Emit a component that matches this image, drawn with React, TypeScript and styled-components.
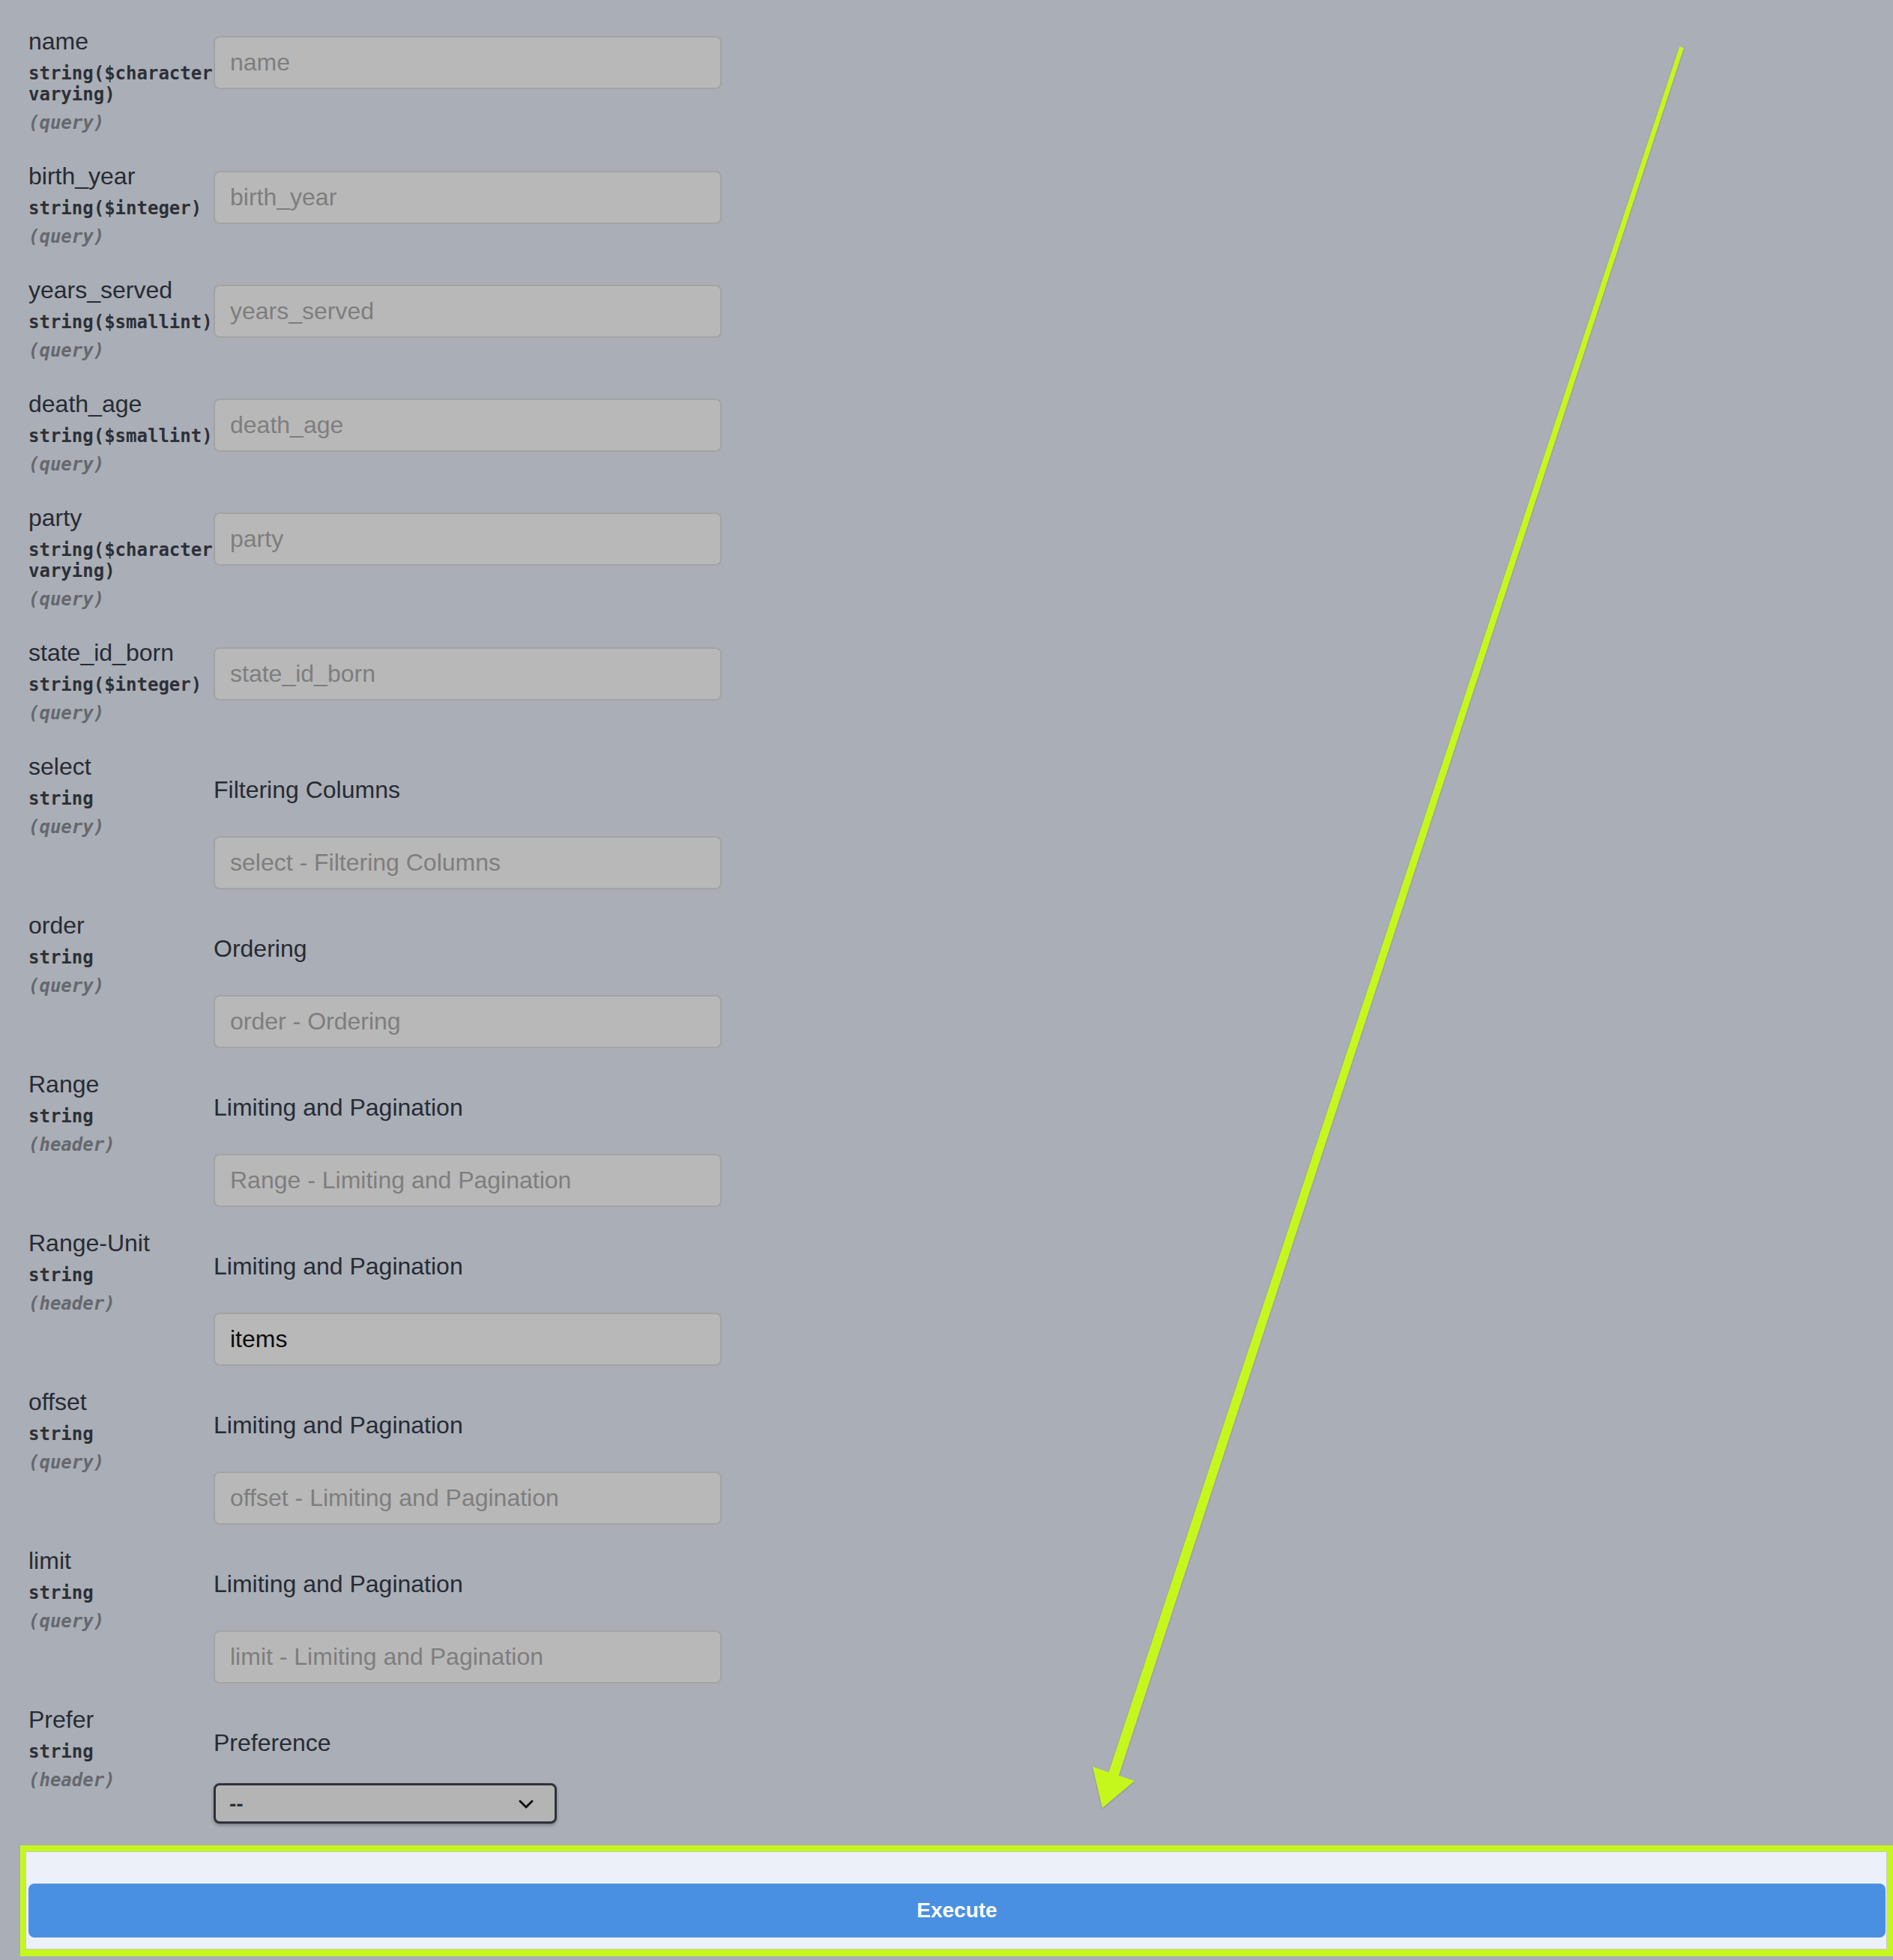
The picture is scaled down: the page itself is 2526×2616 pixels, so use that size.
import React from "react";
import styled, { createGlobalStyle } from "styled-components";

const GlobalStyle = createGlobalStyle`
  html, body {
    margin: 0;
    padding: 0;
    background: #aaaeb6;
  }
  body {
    font-family: "Liberation Sans", Arial, sans-serif;
  }
`;

const Page = styled.div`
  position: relative;
  width: 2526px;
  height: 2616px;
  box-sizing: border-box;
  padding-top: 17px;
  overflow: hidden;
  background: #aaaeb6;
`;

const ParamTable = styled.div`
  display: flex;
  flex-direction: column;
  padding-left: 38px;
`;

const ParamRow = styled.div`
  display: grid;
  grid-template-columns: 247px 678px;
  align-items: start;
`;

const NameCol = styled.div`
  padding: 20px 0 19px;
`;

const ParamName = styled.div`
  font-size: 32px;
  line-height: 37px;
  color: #272b34;
`;

const ParamType = styled.div`
  font-family: "DejaVu Sans Mono", "Liberation Mono", monospace;
  font-weight: 700;
  font-size: 24px;
  line-height: 28px;
  padding: 10px 0;
  color: #2d3037;
`;

const ParamIn = styled.div`
  font-family: "DejaVu Sans Mono", "Liberation Mono", monospace;
  font-weight: 700;
  font-style: italic;
  font-size: 24px;
  line-height: 28px;
  color: #65686e;
`;

const DescCol = styled.div<{ $described: boolean }>`
  padding-bottom: ${(p) => (p.$described ? "10px" : "0")};
`;

const Description = styled.p`
  margin: 48px 0 0;
  font-size: 32px;
  line-height: 42px;
  color: #272b34;
`;

const TextInput = styled.input<{ $top: number }>`
  display: block;
  box-sizing: border-box;
  width: 678px;
  height: 71px;
  margin: ${(p) => p.$top}px 0 0;
  padding: 0 20px;
  font-family: "Liberation Sans", Arial, sans-serif;
  font-size: 32px;
  color: #0d0d0d;
  background: #b8b8b8;
  border: 2px solid #a3a3a3;
  border-radius: 8px;
  outline: none;

  &::placeholder {
    color: #7e7e7e;
  }
`;

const SelectBox = styled.div`
  position: relative;
  width: 458px;
  margin: 33px 0 29px;
`;

const Select = styled.select`
  display: block;
  box-sizing: border-box;
  width: 100%;
  height: 54px;
  padding: 0 60px 0 18px;
  appearance: none;
  font-family: "Liberation Sans", Arial, sans-serif;
  font-size: 28px;
  font-weight: 700;
  color: #2d2f3a;
  background: #b4b4b4;
  border: 3px solid #2f323a;
  border-radius: 8px;
  box-shadow: 0 2px 4px rgba(0, 0, 0, 0.3);
  outline: none;
`;

const Chevron = styled.svg`
  position: absolute;
  right: 31px;
  top: 22px;
  pointer-events: none;
`;

const ExecuteHighlight = styled.div`
  margin-left: 27px;
  border: 8px solid #c6f71d;
  border-left-width: 7px;
  border-bottom-width: 9px;
`;

const ExecuteWrapper = styled.div`
  background: #ecf1f9;
  border: 1px solid #c4c9d0;
  padding: 42px 1px 15px 3px;
`;

const ExecuteButton = styled.button`
  display: block;
  width: 100%;
  height: 72px;
  background: #4a90e2;
  border: none;
  border-radius: 8px;
  color: #fff;
  font-family: "Liberation Sans", Arial, sans-serif;
  font-weight: 700;
  font-size: 28px;
`;

const ArrowOverlay = styled.svg`
  position: absolute;
  top: 0;
  left: 0;
  pointer-events: none;
  filter: drop-shadow(0 1px 1px rgba(0, 0, 0, 0.2));
`;

interface Param {
  name: string;
  type: string;
  in: string;
  description?: string;
  placeholder: string;
  value?: string;
}

const params: Param[] = [
  { name: "name", type: "string($character varying)", in: "query", placeholder: "name" },
  { name: "birth_year", type: "string($integer)", in: "query", placeholder: "birth_year" },
  { name: "years_served", type: "string($smallint)", in: "query", placeholder: "years_served" },
  { name: "death_age", type: "string($smallint)", in: "query", placeholder: "death_age" },
  { name: "party", type: "string($character varying)", in: "query", placeholder: "party" },
  { name: "state_id_born", type: "string($integer)", in: "query", placeholder: "state_id_born" },
  {
    name: "select",
    type: "string",
    in: "query",
    description: "Filtering Columns",
    placeholder: "select - Filtering Columns",
  },
  { name: "order", type: "string", in: "query", description: "Ordering", placeholder: "order - Ordering" },
  {
    name: "Range",
    type: "string",
    in: "header",
    description: "Limiting and Pagination",
    placeholder: "Range - Limiting and Pagination",
  },
  {
    name: "Range-Unit",
    type: "string",
    in: "header",
    description: "Limiting and Pagination",
    placeholder: "Range-Unit - Limiting and Pagination",
    value: "items",
  },
  {
    name: "offset",
    type: "string",
    in: "query",
    description: "Limiting and Pagination",
    placeholder: "offset - Limiting and Pagination",
  },
  {
    name: "limit",
    type: "string",
    in: "query",
    description: "Limiting and Pagination",
    placeholder: "limit - Limiting and Pagination",
  },
];

const ParamLabel = ({ p }: { p: { name: string; type: string; in: string } }) => (
  <NameCol>
    <ParamName>{p.name}</ParamName>
    <ParamType>{p.type}</ParamType>
    <ParamIn>({p.in})</ParamIn>
  </NameCol>
);

const App = (): JSX.Element => {
  return (
    <>
      <GlobalStyle />
      <Page>
        <ParamTable>
          {params.map((p) => (
            <ParamRow key={p.name}>
              <ParamLabel p={p} />
              <DescCol $described={!!p.description}>
                {p.description && <Description>{p.description}</Description>}
                <TextInput
                  $top={p.description ? 41 : 31}
                  placeholder={p.placeholder}
                  defaultValue={p.value}
                />
              </DescCol>
            </ParamRow>
          ))}
          <ParamRow>
            <ParamLabel p={{ name: "Prefer", type: "string", in: "header" }} />
            <DescCol $described={false}>
              <Description>Preference</Description>
              <SelectBox>
                <Select defaultValue="--">
                  <option value="--">--</option>
                </Select>
                <Chevron width="20" height="12" viewBox="0 0 20 12">
                  <polyline
                    points="2,2 10,10 18,2"
                    fill="none"
                    stroke="#111"
                    strokeWidth="3"
                    strokeLinecap="round"
                    strokeLinejoin="round"
                  />
                </Chevron>
              </SelectBox>
            </DescCol>
          </ParamRow>
        </ParamTable>
        <ExecuteHighlight>
          <ExecuteWrapper>
            <ExecuteButton>Execute</ExecuteButton>
          </ExecuteWrapper>
        </ExecuteHighlight>
        <ArrowOverlay width="2526" height="2616" viewBox="0 0 2526 2616">
          <polygon
            points="2241.2,62.1 2246.9,63.9 1492.7,2370.2 1479.4,2365.8"
            fill="#c6f71d"
          />
          <polygon points="1458,2358 1514,2377 1471,2413" fill="#c6f71d" />
        </ArrowOverlay>
      </Page>
    </>
  );
};

export default App;
